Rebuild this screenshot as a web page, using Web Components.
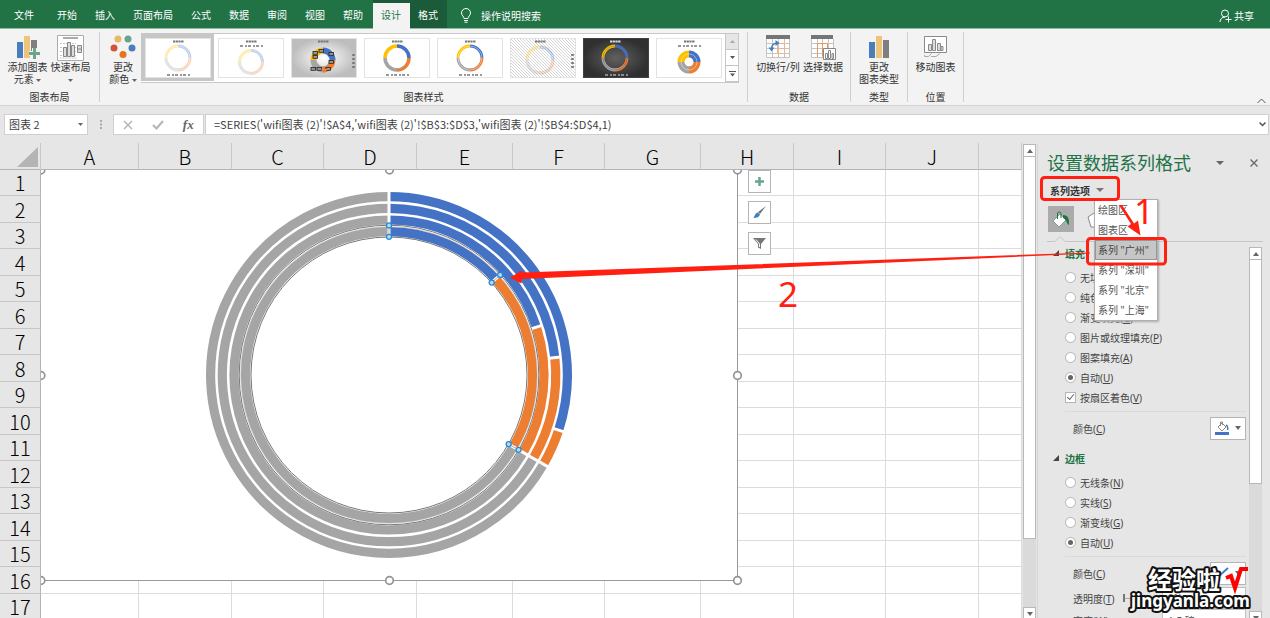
<!DOCTYPE html>
<html lang="zh-CN">
<head>
<meta charset="utf-8">
<title>图表 2 - Excel</title>
<style>
html, body { margin: 0; height: 100%; }
body { font-family: "Noto Sans", "Noto Sans CJK SC", sans-serif; font-size: 10px; color: #333; overflow: hidden; }
</style>
</head>
<body>
<xl-app></xl-app>

<script>
const BASE = `<style>
*, *::before, *::after { box-sizing: border-box; }
button, input { font: inherit; color: inherit; margin: 0; padding: 0; border: 0; background: none; border-radius: 0; }
svg { display: block; }
a { color: inherit; text-decoration: none; }
</style>`;

function define(name, markup) {
  const tpl = document.createElement('template');
  tpl.innerHTML = BASE + (typeof markup === 'string' ? markup : '');
  customElements.define(name, class extends HTMLElement {
    constructor() {
      super();
      const root = this.attachShadow({ mode: 'open' });
      if (typeof markup === 'function') tpl.innerHTML = BASE + markup(this);
      root.append(tpl.content.cloneNode(true));
    }
  });
}

/* Geometry: clockwise angles in degrees, measured from twelve o'clock */
function point(cx, cy, r, deg) {
  const a = (deg - 90) * Math.PI / 180;
  return [(cx + r * Math.cos(a)).toFixed(2), (cy + r * Math.sin(a)).toFixed(2)];
}
function arc(cx, cy, r, from, to, color, width) {
  const p = point(cx, cy, r, from), q = point(cx, cy, r, to);
  return `<path d="M${p}A${r} ${r} 0 ${to - from > 180 ? 1 : 0} 1 ${q}" fill="none" stroke="${color}" stroke-width="${width}"/>`;
}

const COL = { blue: '#4472c4', orange: '#ed7d31', gray: '#a5a5a5', gold: '#ffc000' };

/* ---------- tab bar ---------- */
define('xl-tabbar', `<style>
:host { display: flex; height: 29px; background: #217346; color: #fff; border-bottom: 1px solid #8fb9a0; line-height: 28px; }
nav { display: flex; }
a { padding: 1px 9px 0; height: 28px; }
a.file { padding: 1px 14px 0 14px; }
.ctx { display: flex; background: #1c5b39; height: 28px; margin-left: 1px; }
.ctx a { padding: 1px 9px 0 8px; }
.ctx a.on { background: #f3f3f3; color: #217346; margin-top: 3px; height: 26px; line-height: 23px; }
.tell { display: flex; align-items: center; gap: 9px; height: 28px; padding: 3px 0 0 13px; }
.share { margin-left: auto; display: flex; align-items: center; gap: 2px; padding: 4px 16px 0 0; height: 28px; }
</style>
<nav>
<a class="file" href="#file">文件</a><a href="#home">开始</a><a href="#insert">插入</a><a href="#layout">页面布局</a><a href="#formulas">公式</a><a href="#data">数据</a><a href="#review">审阅</a><a href="#view">视图</a><a href="#help">帮助</a>
<span class="ctx"><a class="on" href="#design">设计</a><a href="#format">格式</a></span>
</nav>
<button class="tell"><svg width="12" height="15" viewBox="0 0 12 15" fill="none" stroke="#fff"><path d="M4 10.500C4 8.500 1.500 7.500 1.500 5a4.500 4.500 0 0 1 9 0C10.500 7.500 8 8.500 8 10.500zM4 12.500h4M4.500 14.200h3"/></svg>操作说明搜索</button>
<button class="share"><svg width="13" height="14" viewBox="0 0 13 14" fill="none" stroke="#fff"><circle cx="6" cy="4.500" r="3.500"/><path d="M1 13c0-3 2-5 5-5M9.500 7.500v6M6.500 10.500h6"/></svg>共享</button>`);

/* ---------- ribbon ---------- */
define('xl-tool', `<style>
:host { display: block; }
button { display: flex; flex-direction: column; align-items: center; width: 100%; line-height: 12px; text-align: center; white-space: nowrap; }
.icon { display: block; height: 29px; padding-top: 3px; }
</style>
<button><span class="icon"><slot name="icon"></slot></span><span><slot></slot></span></button>`);

define('xl-group', `<style>
:host { display: grid; grid-template-rows: 59px 12px; height: 70px; border-right: 1px solid #cfcfcf; }
.tools { display: flex; }
.name { text-align: center; line-height: 12px; }
</style>
<div class="tools"><slot></slot></div><div class="name"><slot name="name"></slot></div>`);

function thumb(kind) {
  const dark = kind === 'dark', pale = kind.startsWith('pale') || kind === 'hatch';
  const cx = kind === 'hatch' ? 30 : kind === 'dark' || kind === 'shade' ? 32 : 33;
  const cy = { pale2: 24, thick: 24, shade: 22, hatch: 22 }[kind] || 20;
  const r = { thick: 8, shade: 9.5, pale2: 11.5, hatch: 13 }[kind] || 12;
  const w = { thick: 7, shade: 6, full: 3.5 }[kind] || 2.8;
  const bg = { shade: 'url(#sh)', dark: 'url(#dk)', hatch: 'url(#ha)' }[kind] || '#fff';
  const cs = [[0, 90, COL.blue], [90, 180, COL.orange], [180, 270, COL.gray], [270, 360, COL.gold]];
  let s = `<svg width="66" height="40" viewBox="0 0 66 40"><defs>
<radialGradient id="sh"><stop offset="0" stop-color="#fff"/><stop offset="1" stop-color="#bdbdbd"/></radialGradient>
<radialGradient id="dk"><stop offset="0" stop-color="#606060"/><stop offset="1" stop-color="#303030"/></radialGradient>
<pattern id="ha" width="3" height="3" patternUnits="userSpaceOnUse"><rect width="3" height="3" fill="#fff"/><path d="M0 0l3 3" stroke="#d4d4d4" stroke-width="1"/></pattern></defs>
<rect x=".5" y=".5" width="65" height="39" fill="${bg}" stroke="${dark ? '#404040' : '#e3e3e3'}"/>
<path d="M${cx - 5} 3.500h11" stroke="${dark ? '#ddd' : '#777'}" stroke-width="2" stroke-dasharray="2.200 .5"/><g opacity="${pale ? .35 : 1}">`;
  cs.forEach(c => s += arc(cx, cy, r, c[0], c[1], c[2], w));
  if (kind !== 'full' && kind !== 'shade') s += `<circle cx="${cx}" cy="${cy}" r="${r}" fill="none" stroke="${dark ? '#555' : '#fff'}" stroke-width=".6" opacity=".7"/>`;
  s += arc(cx, cy, r - w / 2 + .5, 130, 250, COL.gray, 1) + '</g>';
  if (kind === 'shade') {
    [[24, 15], [30, 13], [40, 16], [24, 19], [40, 24], [22, 31], [28, 31], [37, 31]].forEach(p =>
      s += `<rect x="${p[0] - 2}" y="${p[1] - 1.5}" width="4.500" height="2.800" fill="#999" stroke="#222" stroke-width=".8"/>`);
    s += `<path d="M30 31h7l-4 4z" fill="${COL.orange}"/>`;
  }
  const side = kind === 'hatch' || kind === 'shade';
  const ly = kind === 'pale2' || kind === 'thick' ? 8 : 37;
  s += side ? `<path d="M62.500 16v14" stroke="#777" stroke-width="2.500" stroke-dasharray="2 2"/>`
            : `<path d="M22 ${ly}h24" stroke="${dark ? '#aaa' : '#777'}" stroke-width="1.500" stroke-dasharray="3 2 2 1"/>`;
  return s + '</svg>';
}

define('xl-gallery', `<style>
:host { display: flex; flex: 1; height: 50px; border: 1px solid #c8c8c8; border-left: 0; background: #fff; overflow: hidden; }
.items { display: flex; flex: 1; }
.items button { border: 4px solid transparent; border-right-width: 3px; width: 73px; height: 47px; flex: none; }
.items button.on { border-color: #c6c6c6; }
.nav { display: grid; grid-template-rows: repeat(3, 16px); width: 13px; border-left: 1px solid #c6c6c6; }
.nav button { display: grid; place-items: center; border-bottom: 1px solid #c6c6c6; }
.nav button:first-child { background: #e6e6e6; }
</style>
<div class="items">
<button class="on" aria-label="样式 1">${thumb('pale')}</button><button aria-label="样式 2">${thumb('pale2')}</button><button aria-label="样式 3">${thumb('shade')}</button><button aria-label="样式 4">${thumb('full')}</button><button aria-label="样式 5">${thumb('ring')}</button><button aria-label="样式 6">${thumb('hatch')}</button><button aria-label="样式 7">${thumb('dark')}</button><button aria-label="样式 8">${thumb('thick')}</button>
</div>
<div class="nav">
<button aria-label="上一行"><svg width="5" height="3"><path d="M0 3l2.500-3L5 3z" fill="#aaa"/></svg></button>
<button aria-label="下一行"><svg width="5" height="3"><path d="M0 0h5l-2.500 3z" fill="#555"/></svg></button>
<button aria-label="其他"><svg width="7" height="6"><path d="M0 .5h7" stroke="#555"/><path d="M1 2.500h5l-2.500 3z" fill="#555"/></svg></button>
</div>`);

const caret = `<svg style="display:inline-block;vertical-align:middle" width="5" height="3"><path d="M0 0h5l-2.500 3z" fill="#666"/></svg>`;

define('xl-ribbon', `<style>
:host { display: flex; position: relative; height: 77px; padding-top: 3px; background: #f3f3f3; border-bottom: 1px solid #d4d4d4; color: #333; line-height: 12px; }
.g1 { width: 100px; } .g2 { width: 648px; } .g3 { width: 103px; } .g4 { width: 57px; } .g5 { width: 56px; }
.g1 xl-tool:first-child { width: 43px; margin-left: 6px; }
.g1 xl-tool:last-of-type { width: 43px; }
.g2 > xl-tool { width: 41px; padding-left: 5px; }
.g2 > xl-gallery { margin: 1px 8px 0 0; }
.g3 xl-tool:first-child { margin-left: 8px; width: 44px; }
.g3 xl-tool:last-of-type { width: 46px; }
.g4 xl-tool, .g5 xl-tool { width: 100%; }
.fold { margin: auto 4px 1px auto; }
</style>
<xl-group class="g1">
<xl-tool><svg slot="icon" width="26" height="26" viewBox="0 0 26 26"><path d="M2 7h6v16H2z" fill="#4a7ebb"/><path d="M9 1h6v22H9z" fill="#eec47a"/><path d="M16 5h6v11h-6z" fill="#7f7f7f"/><path d="M19.500 13v11M14 18.500h11" stroke="#f3f3f3" stroke-width="5"/><path d="M19.500 13v11M14 18.500h11" stroke="#6aa58c" stroke-width="3"/></svg>添加图表<br>元素 ${caret}</xl-tool>
<xl-tool><svg slot="icon" width="27" height="26" viewBox="0 0 27 26" fill="none" stroke="#aaa"><path d="M.5.5h26v25H.5z" fill="#fff"/><path d="M6 3h15" stroke-width="2"/><path d="M3 8.500h16M3 12.500h16M3 16.500h16M3 20.500h16M2.500 23h17" stroke="#c4c4c4" stroke-dasharray="2 1"/><path d="M6.500 12.500h3v9h-3zM10.500 7.500h3v14h-3zM14.500 10.500h3v11h-3zM20.500 10.500h4v7h-4zM21 14h4" stroke="#888" fill="#ddd"/></svg>快速布局<br>${caret}</xl-tool>
<span slot="name">图表布局</span>
</xl-group>
<xl-group class="g2">
<xl-tool><svg slot="icon" width="26" height="26" viewBox="0 0 26 26"><circle cx="8" cy="4" r="3.500" fill="#e8b866"/><circle cx="18" cy="4" r="3.500" fill="#68a490"/><circle cx="4" cy="13" r="3.500" fill="#d2553a"/><circle cx="22" cy="13" r="3.500" fill="#4a7ebb"/><circle cx="13" cy="19.500" r="3.500" fill="#e4761f"/></svg>更改<br>颜色 ${caret}</xl-tool>
<xl-gallery></xl-gallery>
<span slot="name">图表样式</span>
</xl-group>
<xl-group class="g3">
<xl-tool><svg slot="icon" width="26" height="26" viewBox="0 0 26 26" fill="none"><path d="M1 1h24v22H1z" fill="#fff"/><path d="M1.500 4v18.500h23V4M7.500 4v18M13.500 4v18M19.500 4v18M1 8.500h24M1 13.500h24M1 18.500h24" stroke="#c4c4c4"/><path d="M12.500 8.500h7v5h-7zM12.500 13.500h7v5h-7z" stroke="#efb58a"/><path d="M1 0h24v4H1z" fill="#757575"/><path d="M6.500 14c0-4 2-6 6.500-6" stroke="#3f7fbf" stroke-width="1.500"/><path d="M10.500 5l4 3-4 3zM3.500 12.500h6l-3 4z" fill="#3f7fbf"/></svg>切换行/列</xl-tool>
<xl-tool><svg slot="icon" width="26" height="26" viewBox="0 0 26 26" fill="none"><path d="M1 1h22v21H1z" fill="#fff"/><path d="M1.500 4v18.500h22V4M7.500 4v18M12.500 4v18M18.500 4v18M1 8.500h22M1 13.500h22M1 18.500h22" stroke="#c4c4c4"/><path d="M7.500 22V8.500h10V20M12.500 9v12" stroke="#e59a5c"/><path d="M1 0h22v4H1z" fill="#757575"/><path d="M13.500 13.500h12v11h-12z" fill="#fff" stroke="#888"/><path d="M15.500 18.500h2v5h-2zM18.500 15.500h2v8h-2zM22 18.500h1.500v5H22z" stroke="#888"/></svg>选择数据</xl-tool>
<span slot="name">数据</span>
</xl-group>
<xl-group class="g4">
<xl-tool><svg slot="icon" width="22" height="26" viewBox="0 0 22 26"><path d="M1 7h6v16H1z" fill="#4a7ebb"/><path d="M8 1h6v22H8z" fill="#eec47a"/><path d="M15 5h6v18h-6z" fill="#7f7f7f"/></svg>更改<br>图表类型</xl-tool>
<span slot="name">类型</span>
</xl-group>
<xl-group class="g5">
<xl-tool><svg slot="icon" width="23" height="26" viewBox="0 0 23 26" fill="none" stroke="#8a8a8a"><path d="M.5 1.500h22v16H.5z" fill="#fff"/><path d="M4.500 9.500h3v6h-3zM8.500 4.500h3v11h-3zM13.500 8.500h3v7h-3zM17 11.500h2v4h-2z" fill="#ddd"/><path d="M.5 20v1.500h4l3-3M7 21.500h5l4-3" stroke="#aaa"/></svg>移动图表</xl-tool>
<span slot="name">位置</span>
</xl-group>
<button class="fold" aria-label="折叠功能区"><svg width="9" height="6" fill="none" stroke="#555"><path d="M.5 5l4-4 4 4"/></svg></button>`);

/* ---------- formula bar ---------- */
define('xl-formula', `<style>
:host { display: flex; height: 37px; padding: 8px 1px 8px 4px; background: #e6e6e6; font: 11px/18px "Noto Sans CJK SC", sans-serif; color: #404040; }
.box { display: flex; align-items: center; background: #fff; border: 1px solid #d0d0d0; height: 21px; }
.box input { height: 19px; padding-bottom: 1px; }
.name { width: 84px; padding-right: 4px; }
.name input { flex: 1; min-width: 0; padding-left: 4px; }
.dots { width: 25px; display: grid; place-items: center; }
.tools { width: 91px; justify-content: space-around; margin-right: 1px; }
.tools .fn { font: italic bold 13px "Liberation Serif", serif; color: #666; }
.fx { flex: 1; padding-right: 2px; }
.fx input { flex: 1; min-width: 0; padding-left: 8px; }
</style>
<div class="box name"><input aria-label="名称框" value="图表 2"><svg width="5" height="3"><path d="M0 0h5l-2.500 3z" fill="#666"/></svg></div>
<div class="dots"><svg width="2" height="9" fill="#aaa"><path d="M0 0h2v2H0zM0 3.500h2v2H0zM0 7h2v2H0z"/></svg></div>
<div class="box tools">
<button aria-label="取消"><svg width="10" height="10" fill="none" stroke="#b5b5b5" stroke-width="1.500"><path d="M1 1l8 8M9 1L1 9"/></svg></button>
<button aria-label="输入"><svg width="12" height="10" fill="none" stroke="#b5b5b5" stroke-width="2"><path d="M1 5l3.500 3.500L11 1"/></svg></button>
<button class="fn" aria-label="插入函数">fx</button>
</div>
<div class="box fx"><input aria-label="编辑栏" value="=SERIES('wifi图表 (2)'!$A$4,'wifi图表 (2)'!$B$3:$D$3,'wifi图表 (2)'!$B$4:$D$4,1)"><svg width="7" height="5" fill="none" stroke="#555" stroke-width="1.500"><path d="M.5.5l3 3 3-3"/></svg></div>`);

/* ---------- scroll bar ---------- */
define('xl-scrollbar', `<style>
:host { display: flex; flex-direction: column; width: 13px; background: #dadada; }
button { height: 13px; flex: none; background: #fff; border: 1px solid #b8b8b8; display: grid; place-items: center; }
.thumb { flex: var(--thumb) 0 0; background: #fff; border: 1px solid #b8b8b8; border-top: 0; }
.rest { flex: var(--rest) 0 0; }
</style>
<button aria-label="向上滚动"><svg width="6" height="4"><path d="M0 4l3-4 3 4z" fill="#666"/></svg></button>
<div class="thumb"></div><div class="rest"></div>
<button aria-label="向下滚动"><svg width="6" height="4"><path d="M0 0h6l-3 4z" fill="#666"/></svg></button>`);

/* ---------- doughnut chart object ---------- */
define('xl-chart', () => {
  const cx = 348, cy = 205, w = 9.2;
  const rings = [[178.4, 108], [166.7, 84], [155, 72], [143.4, 48]];
  let s = '';
  rings.forEach(([r, a]) => {
    s += arc(cx, cy, r, 0, a, COL.blue, w) + arc(cx, cy, r, a, 120, COL.orange, w) + arc(cx, cy, r, 120, 360, COL.gray, w);
    [0, a, 120].forEach(d => {
      const p = point(cx, cy, r - 5.8, d), q = point(cx, cy, r + 5.8, d);
      s += `<path d="M${p}L${q}" stroke="#fff" stroke-width="3"/>`;
    });
  });
  [149.8, 138].forEach(r => s += `<circle cx="${cx}" cy="${cy}" r="${r}" fill="none" stroke="#777" stroke-width="1"/>`);
  s += `<circle cx="${cx}" cy="${cy}" r="148.300" fill="none" stroke="#aaa" stroke-width=".5"/>`;
  [0, 48, 120].forEach(d => {
    const p = point(cx, cy, 138.2, d), q = point(cx, cy, 149.6, d);
    s += `<path d="M${p}L${q}" stroke="#aaa"/>`;
    [p, q].forEach(h => s += `<circle cx="${h[0]}" cy="${h[1]}" r="2.500" fill="#b5dcf5" stroke="#2a87d0" stroke-width="1.300"/>`);
  });
  [[348.5, 0], [696.5, 0], [0, 0], [0, 205.5], [696.5, 205.5], [0, 410.5], [348.5, 410.5], [696.5, 410.5]].forEach(h =>
    s += `<circle cx="${h[0]}" cy="${h[1]}" r="3.800" fill="#fff" stroke="#949494" stroke-width="1.700"/>`);
  return `<style>
:host { display: block; }
</style><svg width="702" height="416" viewBox="0 0 702 416" role="img" aria-label="圆环图"><path d="M0 0h696.500v410.500H0z" fill="#fff"/><path d="M696.500 0v410.500H0" fill="none" stroke="#999" stroke-width="1"/>${s}</svg>`;
});

/* ---------- worksheet ---------- */
define('xl-sheet', () => {
  const widths = [98, 93, 92, 93, 96, 92, 96, 93, 92, 93];
  const rows = Array.from({ length: 17 }, (_, i) => `<tr><th scope="row">${i + 1}</th>${'<td></td>'.repeat(11)}</tr>`).join('');
  return `<style>
:host { display: block; position: relative; overflow: hidden; background: #fff; }
table { border-collapse: separate; border-spacing: 0; table-layout: fixed; width: 100%; }
th { font: 300 20px/24px "Noto Sans CJK SC", sans-serif; color: #000; background: #e6e6e6; padding: 0; height: 26px; }
thead th { height: 27px; border-bottom: 1px solid #b4b4b4; border-right: 1px solid #c9c9c9; padding-top: 1px; }
tbody th { border-right: 1px solid #b4b4b4; border-bottom: 1px solid #c6c6c6; }
tbody tr:nth-child(even) th { line-height: 25px; }
tbody tr { height: 26px; }
tbody tr:nth-child(even) { height: 27px; }
td { border-right: 1px solid #dcdcdc; border-bottom: 1px solid #dcdcdc; padding: 0; }
thead th svg { margin-left: 17px; }
.object { position: absolute; left: 41px; top: 27px; overflow: hidden; }
.side { position: absolute; left: 748px; top: 27px; display: grid; gap: 8px; }
.side button { width: 23px; height: 23px; border: 1px solid #b5b5b5; background: #fff; display: grid; place-items: center; }
</style>
<table><colgroup><col style="width:41px">${widths.map(w => `<col style="width:${w}px">`).join('')}<col></colgroup>
<thead><tr><th aria-label="全选"><svg width="22" height="22"><path d="M21 1v20H0z" fill="#b4b4b4"/></svg></th>${'ABCDEFGHIJ'.split('').map(c => `<th scope="col">${c}</th>`).join('')}<th></th></tr></thead>
<tbody>${rows}</tbody></table>
<div class="object"><xl-chart></xl-chart></div>
<div class="side">
<button aria-label="图表元素"><svg width="11" height="11"><path d="M5.500 1v9M1 5.500h9" stroke="#6aa58c" stroke-width="2.500"/></svg></button>
<button aria-label="图表样式"><svg width="13" height="13" viewBox="0 0 13 13"><path d="M13 0L7 8 5 6z" fill="#777"/><path d="M5 6.500l2 2C6.500 11 4 12 0 12c2-1 1.500-5 5-5.500z" fill="#3f7fbf"/></svg></button>
<button aria-label="图表筛选器"><svg width="13" height="13" viewBox="0 0 13 13"><path d="M0 1h13L8 7v5l-3-1.500V7z" fill="#777"/><path d="M3 2.500L6.500 7v3" stroke="#fff" fill="none"/></svg></button>
</div>`;
});

/* ---------- format pane ---------- */
define('xl-section', `<style>
:host { display: block; }
h3 { display: flex; align-items: center; gap: 6px; margin: 0; height: 20px; font-size: 10px; font-weight: bold; color: #217346; }
</style><h3><svg width="6" height="6"><path d="M6 0v6H0z" fill="#444"/></svg><span><slot name="title"></slot></span></h3><slot></slot>`);

define('xl-choice', el => {
  const type = el.getAttribute('type') || 'radio';
  const on = el.hasAttribute('checked') ? 'checked' : '';
  return `<style>
:host { display: block; }
label { display: flex; align-items: center; height: 20px; gap: 4px; padding-left: 12px; white-space: nowrap; color: #444; }
input { appearance: none; width: 11px; height: 11px; border: 1px solid #b5b5b5; background: #fff; display: grid; place-items: center; flex: none; }
input[type=radio] { border-radius: 50%; }
input[type=radio]:checked::after { content: ""; width: 5px; height: 5px; border-radius: 50%; background: #666; }
input[type=checkbox]:checked::after { content: ""; width: 7px; height: 4px; border: solid #666; border-width: 0 0 1px 1px; transform: rotate(-50deg); margin-top: -2px; }
</style><label><input type="${type}" ${on}><span><slot></slot></span></label>`;
});

define('xl-menu', `<style>
:host { display: block; width: 64px; background: #fff; border: 1px solid #b0b0b0; box-shadow: 1px 1px 2px #aaa; color: #555; }
button { display: block; width: 100%; height: 20px; text-align: left; padding-left: 2px; line-height: 18px; border: 1px solid transparent; white-space: nowrap; }
.on { background: #c6c6c6; border-color: #969696; color: #444; }
</style>
<button>绘图区</button><button>图表区</button><button class="on">系列 "广州"</button><button>系列 "深圳"</button><button>系列 "北京"</button><button>系列 "上海"</button>`);

define('xl-pane', `<style>
:host { display: flex; flex-direction: column; position: relative; background: #e6e6e6; border-left: 1px solid #d6d6d6; overflow: hidden; color: #444; }
header { display: flex; align-items: center; height: 38px; padding: 2px 12px 0 9px; flex: none; }
h2 { margin: 0; font-size: 18px; font-weight: normal; color: #217346; flex: 1; line-height: 24px; white-space: nowrap; }
header button + button { margin-left: 26px; }
.target { display: flex; align-items: center; gap: 6px; height: 18px; margin-left: 12px; font-weight: bold; color: #333; flex: none; align-self: flex-start; }
.kinds { display: flex; gap: 10px; height: 36px; margin: 0 7px 0 10px; padding-top: 7px; flex: none; }
.kinds button { width: 26px; height: 26px; display: grid; place-items: center; }
.kinds .on { background: #ababab; }
.rule { display: flex; align-items: flex-end; margin: 0 7px 0 9px; height: 7px; flex: none; }
.rule::before { content: ""; width: 8px; border-bottom: 1px solid #c6c6c6; }
.rule::after { content: ""; flex: 1; border-bottom: 1px solid #c6c6c6; }
.body { display: flex; flex: 1; min-height: 0; padding: 1px 8px 0 15px; }
.list { flex: 1; min-width: 0; padding-right: 3px; }
hr { border: 0; border-top: 1px solid #dadada; margin: 4px 0 0 12px; }
xl-section { margin-bottom: 8px; }
xl-section xl-choice:first-of-type { margin-top: 4px; }
.line { display: flex; align-items: center; justify-content: space-between; height: 24px; margin: 4px 0 3px; padding-left: 20px; }
.line.tight { height: 20px; margin: 0 0 2px; }
.swatch { display: flex; align-items: center; justify-content: center; gap: 6px; width: 36px; height: 23px; border: 1px solid #b5b5b5; background: #fff; }
.num { width: 84px; height: 22px; border: 1px solid #c0c0c0; background: #fff; padding-left: 5px; color: #555; flex: none; }
.slider { flex: 1; margin: 0 4px 0 8px; height: 8px; appearance: none; background: linear-gradient(#aaa, #aaa) center / 100% 1px no-repeat; width: 20px; min-width: 0; }
.slider::-webkit-slider-thumb { appearance: none; width: 2px; height: 8px; background: #777; }
xl-scrollbar { --thumb: 224; --rest: 127; margin: 4px 0 -6px; width: 13px; }
xl-menu { position: absolute; left: 56px; top: 56px; }
</style>
<header><h2>设置数据系列格式</h2><button aria-label="任务窗格选项"><svg width="8" height="4"><path d="M0 0h8L4 4z" fill="#666"/></svg></button><button aria-label="关闭"><svg width="8" height="8" stroke="#666" stroke-width="1.300"><path d="M.5.5l7 7M7.500.5l-7 7"/></svg></button></header>
<button class="target">系列选项<svg width="8" height="4"><path d="M0 0h8L4 4z" fill="#777"/></svg></button>
<div class="kinds"><button class="on" aria-label="填充与线条"><svg width="18" height="18" viewBox="0 0 18 18"><path d="M1 11l7-7 6 6-7 7z" fill="#fff" stroke="#217346" stroke-width=".5"/><path d="M5.500 9V3a2 2 0 0 1 3.500 0v5" fill="none" stroke="#217346"/><path d="M11 5c5 0 6.500 4 6 10-2.500-1-2-5-6-7z" fill="#217346"/></svg></button>
<button aria-label="效果"><svg width="20" height="18" fill="#fff" stroke="#888"><path d="M1 7l9-6 9 6-3 10H4z"/></svg></button></div>
<div class="rule"><svg width="10" height="6" fill="none" stroke="#c6c6c6"><path d="M0 5.500L5 .5l5 5"/></svg></div>
<div class="body"><div class="list">
<xl-section><span slot="title">填充</span>
<xl-choice>无填充(<u>N</u>)</xl-choice><xl-choice>纯色填充(<u>S</u>)</xl-choice><xl-choice>渐变填充(<u>G</u>)</xl-choice><xl-choice>图片或纹理填充(<u>P</u>)</xl-choice><xl-choice>图案填充(<u>A</u>)</xl-choice><xl-choice checked>自动(<u>U</u>)</xl-choice><xl-choice type="checkbox" checked>按扇区着色(<u>V</u>)</xl-choice>
<hr>
<div class="line"><span>颜色(<u>C</u>)</span><button class="swatch" aria-label="填充颜色"><svg width="14" height="14" viewBox="0 0 14 14"><path d="M3 6l4-4 4 4-4 4z" fill="#fff" stroke="#888"/><path d="M5.500 5V1h2v3" fill="none" stroke="#888"/><path d="M11 4c2 1 2 3 1.500 5" fill="none" stroke="#3f7fbf" stroke-width="1.500"/><path d="M0 11h14v3H0z" fill="#4472c4"/></svg><svg width="6" height="4"><path d="M0 0h6L3 4z" fill="#666"/></svg></button></div>
</xl-section>
<xl-section><span slot="title">边框</span>
<xl-choice>无线条(<u>N</u>)</xl-choice><xl-choice>实线(<u>S</u>)</xl-choice><xl-choice>渐变线(<u>G</u>)</xl-choice><xl-choice checked>自动(<u>U</u>)</xl-choice>
<hr>
<div class="line"><span>颜色(<u>C</u>)</span><button class="swatch" aria-label="线条颜色"><svg width="14" height="14"><path d="M4 10l9-8" stroke="#3f7fbf" stroke-width="2"/></svg><svg width="6" height="4"><path d="M0 0h6L3 4z" fill="#666"/></svg></button></div>
<div class="line tight"><label for="alpha">透明度(<u>T</u>)</label><input class="slider" type="range" value="0" aria-label="透明度滑块"><input class="num" id="alpha" value="0%"></div>
<div class="line tight"><label for="wid">宽度(<u>W</u>)</label><input class="num" id="wid" value="1.5 磅"></div>
</xl-section>
</div><xl-scrollbar></xl-scrollbar></div>
<xl-menu></xl-menu>`);

/* ---------- red mark-up and site stamp ---------- */
define('xl-notes', `<style>
:host { display: block; position: absolute; inset: 0; pointer-events: none; }
text { font-family: "Noto Sans", "Noto Sans CJK SC", sans-serif; }
.step { font-size: 35px; fill: #ff2011; }
.stamp { font-weight: bold; fill: #fff; stroke: #111; stroke-width: 4px; stroke-linejoin: round; paint-order: stroke; }
</style>
<svg width="100%" height="100%">
<g fill="none" stroke="#ff2011" stroke-width="3"><rect x="1041.500" y="177.500" width="77" height="22" rx="3"/><rect x="1087.500" y="238.500" width="78" height="25.500" rx="3"/></g>
<g fill="#ff2011"><path d="M1090 252.500L522 272.500 521.500 270.500 510 277.700 521.500 283.500 522 279 1090 253.500z"/><path d="M1119 205l3 0 12 18.500 4-3 2.500 15-13-9 3.500-2.500z"/></g>
<text class="step" x="1134" y="224">1</text><text class="step" x="778" y="307">2</text>
<text class="stamp" x="1148" y="589" font-size="24">经验啦</text>
<text class="stamp" x="1131" y="607" font-size="17">jingyanla.com</text>
<path d="M1226 578l5-2 4 12 6-19h7" fill="none" stroke="#f00" stroke-width="4"/>
</svg>`);

/* ---------- window ---------- */
define('xl-app', `<style>
:host { display: flex; flex-direction: column; position: relative; height: 100vh; overflow: hidden; background: #e6e6e6; }
main { display: grid; grid-template-columns: minmax(0, 1fr) 13px 233px; column-gap: 1px; flex: 1; min-height: 0; }
main > xl-scrollbar { --thumb: 383; --rest: 68; margin: 1px 0 -2px; }
</style>
<xl-tabbar></xl-tabbar><xl-ribbon></xl-ribbon><xl-formula></xl-formula>
<main><xl-sheet></xl-sheet><xl-scrollbar></xl-scrollbar><xl-pane></xl-pane></main>
<xl-notes></xl-notes>`);
</script>
</body>
</html>
